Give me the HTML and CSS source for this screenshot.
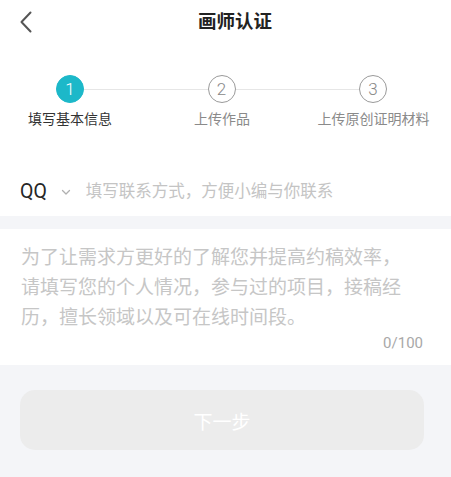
FILE: index.html
```html
<!DOCTYPE html>
<html lang="zh-CN">
<head>
<meta charset="utf-8">
<link rel="stylesheet" href="styles.css">
</head>
<body>
<div class="page">
  <header class="topbar">
    <span class="back">
      <svg width="14" height="22" viewBox="0 0 14 22"><path d="M11.5 1.5 L2.5 11 L11.5 20.5" fill="none" stroke="#555" stroke-width="2" stroke-linecap="round" stroke-linejoin="round"/></svg>
    </span>
    <h1 class="title">画师认证</h1>
    <span></span>
  </header>

  <section class="steps">
    <div class="track">
      <span class="dot active">1</span>
      <span class="line"></span>
      <span class="dot">2</span>
      <span class="line"></span>
      <span class="dot">3</span>
    </div>
    <div class="labels">
      <span class="label active">填写基本信息</span>
      <span class="label">上传作品</span>
      <span class="label">上传原创证明材料</span>
    </div>
  </section>

  <div class="contact">
    <span class="qq">QQ</span>
    <svg class="caret" width="10" height="7" viewBox="0 0 10 7"><path d="M1.5 1.5 L5 5 L8.5 1.5" fill="none" stroke="#b0b0b0" stroke-width="1.3" stroke-linecap="round" stroke-linejoin="round"/></svg>
    <span class="placeholder">填写联系方式，方便小编与你联系</span>
  </div>

  <div class="band"></div>

  <div class="intro">
    <p class="intro-text">为了让需求方更好的了解您并提高约稿效率，请填写您的个人情况，参与过的项目，接稿经历，擅长领域以及可在线时间段。</p>
    <div class="counter">0/100</div>
  </div>

  <div class="footer">
    <div class="next">下一步</div>
  </div>
</div>
</body>
</html>
```

FILE: styles.css
```css
* { box-sizing: border-box; }
html, body {
  margin: 0;
  padding: 0;
  background: #f4f5f8;
  font-family: "Roboto", "Noto Sans CJK SC", sans-serif;
}
.page {
  width: 451px;
  min-height: 477px;
  background: #f4f5f8;
}
.topbar {
  height: 44px;
  background: #fff;
  display: grid;
  grid-template-columns: 1fr auto 1fr;
  align-items: center;
  padding: 0 0 0 19px;
}
.back {
  display: flex;
  align-items: center;
  height: 22px;
}
.title {
  margin: 0;
  font-size: 18.5px;
  font-weight: 700;
  color: #222;
  line-height: 24px;
}
.steps {
  background: #fff;
  padding: 31px 0 39px;
}
.track {
  display: flex;
  align-items: center;
  padding: 0 64px 0 56px;
}
.dot {
  width: 28px;
  height: 28px;
  border-radius: 50%;
  border: 1.5px solid #9a9a9a;
  color: #888;
  font-size: 17px;
  font-weight: 300;
  display: flex;
  align-items: center;
  justify-content: center;
  flex: none;
}
.dot.active {
  background: #1cb8c9;
  border-color: #1cb8c9;
  color: #fff;
}
.line {
  flex: 1;
  height: 1px;
  background: #e6e6e6;
}
.labels {
  display: grid;
  grid-template-columns: 140px 164px 139px;
  padding: 6px 8px 0 0;
}
.label {
  text-align: center;
  font-size: 14px;
  line-height: 20px;
  color: #8a8a8a;
  white-space: nowrap;
}
.label.active { color: #333; }
.contact {
  background: #fff;
  height: 48px;
  display: flex;
  align-items: center;
  padding-left: 20px;
}
.qq {
  font-size: 19.5px;
  font-weight: 400;
  color: #262626;
  line-height: 24px;
}
.caret {
  margin-left: 14px;
}
.placeholder {
  margin-left: 15px;
  font-size: 16.5px;
  color: #c4c4c4;
  line-height: 24px;
}
.band {
  height: 13px;
  background: #f4f5f8;
}
.intro {
  background: #fff;
  padding: 14px 28px 12px 21px;
}
.intro-text {
  margin: 0;
  width: 392px;
  font-size: 19px;
  line-height: 30px;
  color: #c6c6c6;
}
.counter {
  text-align: right;
  font-size: 15px;
  line-height: 20px;
  color: #a8a8a8;
}
.footer {
  padding: 25px 27px 27px 20px;
}
.next {
  height: 60px;
  border-radius: 15px;
  background: #ececec;
  color: #fff;
  font-size: 19px;
  display: flex;
  align-items: center;
  justify-content: center;
}
```
